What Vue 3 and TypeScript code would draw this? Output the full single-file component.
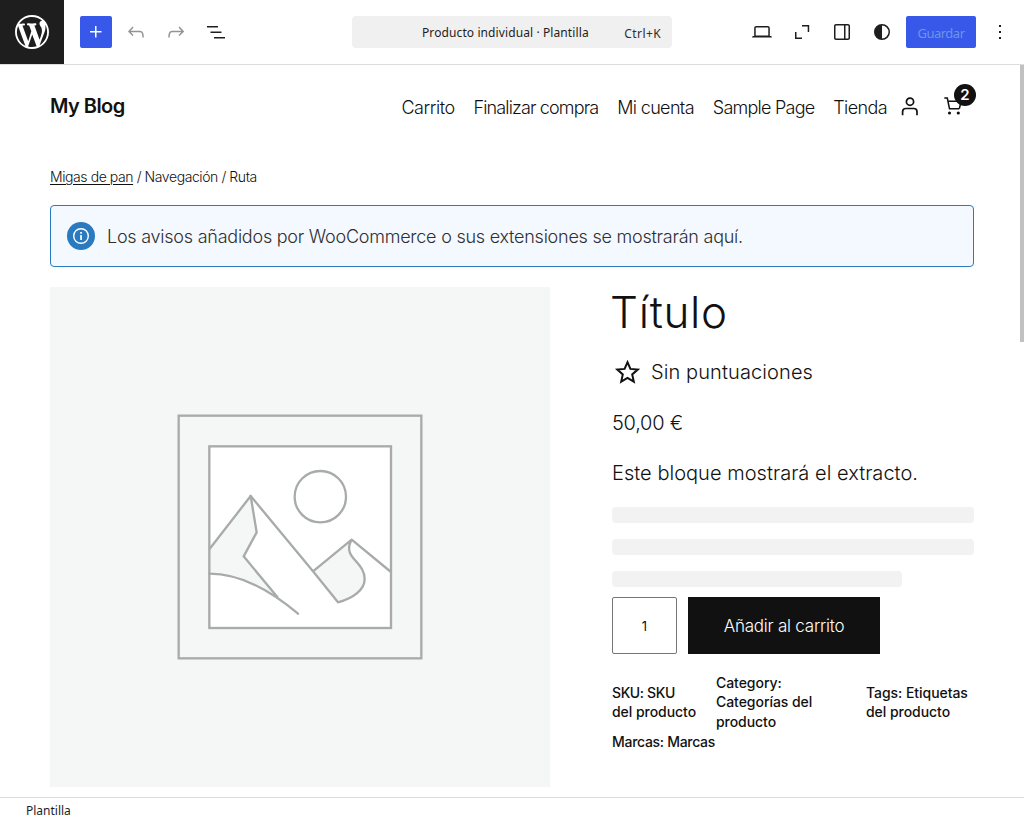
<script setup lang="ts">
interface NavLink {
  label: string
  cls: string
}

const links: NavLink[] = [
  { label: 'Carrito', cls: 'n-cart' },
  { label: 'Finalizar compra', cls: 'n-checkout' },
  { label: 'Mi cuenta', cls: 'n-account' },
  { label: 'Sample Page', cls: 'n-sample' },
  { label: 'Tienda', cls: 'n-shop' },
]
</script>

<template>
  <div class="editor">
    <header class="topbar">
      <div class="wp">
        <svg width="34" height="34" viewBox="0 0 20 20">
          <path fill="#fff" d="M20 10c0-5.51-4.49-10-10-10C4.48 0 0 4.49 0 10c0 5.52 4.48 10 10 10 5.51 0 10-4.48 10-10zM7.78 15.37L4.37 6.22c.55-.02 1.17-.08 1.17-.08.5-.06.44-1.13-.06-1.11 0 0-1.45.11-2.37.11-.18 0-.37 0-.58-.01C4.12 2.69 6.87 1.11 10 1.11c2.33 0 4.45.87 6.05 2.34-.68-.11-1.65.39-1.65 1.58 0 .74.45 1.36.9 2.1.35.61.55 1.36.55 2.46 0 1.49-1.4 5-1.4 5l-3.03-8.37c.54-.02.82-.17.82-.17.5-.05.44-1.25-.06-1.22 0 0-1.44.12-2.38.12-.87 0-2.33-.12-2.33-.12-.5-.03-.56 1.2-.06 1.22l.92.08 1.26 3.41zM17.41 10c.24-.64.74-1.87.43-4.25.7 1.29 1.05 2.71 1.05 4.25 0 3.29-1.73 6.24-4.4 7.78.97-2.59 1.94-5.2 2.92-7.78zM6.1 18.09C3.12 16.65 1.11 13.53 1.11 10c0-1.3.23-2.48.72-3.59C3.25 10.3 4.67 14.2 6.1 18.09zm4.03-6.63l2.58 6.98c-.86.29-1.76.45-2.71.45-.79 0-1.57-.11-2.29-.33.81-2.38 1.62-4.74 2.42-7.1z" />
        </svg>
      </div>
      <div class="tools">
        <button class="tool add"><svg viewBox="0 0 24 24"><path d="M11 12.5V17.5H12.5V12.5H17.5V11H12.5V6H11V11H6V12.5H11Z" /></svg></button>
        <button class="tool off"><svg viewBox="0 0 24 24"><path d="M18.3 11.7c-.6-.6-1.4-.9-2.3-.9H6.7l2.9-3.3-1.1-1-4.5 5L8.5 16l1-1-2.7-2.7H16c.5 0 .9.2 1.3.5 1 1 1 3.4 1 4.5v.3h1.5v-.2c0-1.5 0-4.3-1.5-5.7z" /></svg></button>
        <button class="tool off"><svg viewBox="0 0 24 24"><path d="M15.6 6.5l-1.1 1 2.9 3.3H8c-.9 0-1.7.3-2.3.9-1.4 1.5-1.4 4.2-1.4 5.6v.2h1.5v-.3c0-1.1 0-3.5 1-4.5.3-.3.7-.5 1.3-.5h9.2L14.5 15l1.1 1.1 4.6-4.6-4.6-5z" /></svg></button>
        <button class="tool"><svg viewBox="0 0 24 24"><path d="M3 6h11v1.5H3V6Zm3.5 5.5h11V13h-11v-1.5ZM21 17H10v1.5h11V17Z" /></svg></button>
      </div>
      <div class="command">
        <span class="doc">Producto individual · Plantilla</span>
        <span class="keys">Ctrl+K</span>
      </div>
      <div class="actions">
        <button class="tool"><svg viewBox="0 0 24 24"><path d="M20.5 16h-.7V8c0-1.1-.9-2-2-2H6.2c-1.1 0-2 .9-2 2v8h-.7c-.8 0-1.5.7-1.5 1.5h20c0-.8-.7-1.5-1.5-1.5zM5.7 8c0-.3.2-.5.5-.5h11.6c.3 0 .5.2.5.5v7.6H5.7V8z" /></svg></button>
        <button class="tool"><svg viewBox="0 0 24 24"><path d="M12 5h7.2v7h-1.5V6.500H12V5ZM5 12h1.500v5.500H12V19H5v-7Z" /></svg></button>
        <button class="tool"><svg viewBox="0 0 24 24"><path d="M18 4H6c-1.1 0-2 .9-2 2v12c0 1.1.9 2 2 2h12c1.1 0 2-.9 2-2V6c0-1.1-.9-2-2-2zm-4 14.5H6c-.3 0-.5-.2-.5-.5V6c0-.3.2-.5.5-.5h8v13zm4.5-.5c0 .3-.2.5-.5.5h-2.5v-13H18c.3 0 .5.2.5.5v12z" /></svg></button>
        <button class="tool"><svg viewBox="0 0 24 24"><path fill-rule="evenodd" d="M20 12a8 8 0 1 1-16 0 8 8 0 0 1 16 0Zm-1.5 0a6.5 6.5 0 0 1-6.5 6.500v-13a6.5 6.5 0 0 1 6.5 6.500Z" /></svg></button>
        <button class="save">Guardar</button>
        <button class="tool"><svg viewBox="0 0 24 24"><path d="M13 19h-2v-2h2v2zm0-6h-2v-2h2v2zm0-6h-2V5h2v2z" /></svg></button>
      </div>
    </header>

    <main class="canvas">
      <div class="site-head">
        <div class="site-title"><span>My Blog</span></div>
        <nav>
          <a v-for="l in links" :key="l.label" :class="l.cls">{{ l.label }}</a>
        </nav>
        <svg class="user" width="18" height="19" viewBox="0 0 18 19" fill="none" stroke="#111" stroke-width="1.7">
          <circle cx="9" cy="4.700" r="3.600" />
          <path d="M1.600 18.200v-3.400q0-3.300 3.300-3.300h7.800q3.300 0 3.300 3.300v3.400" />
        </svg>
        <div class="cart">
          <svg width="20" height="20" viewBox="0 0 20 20" fill="none" stroke="#111" stroke-width="1.500">
            <path d="M.3 2h3l2.200 10.700h9.700M4 5.300h13.200l-1.900 7.400" />
            <circle cx="5.500" cy="17" r="1.600" fill="#111" stroke="none" />
            <circle cx="14.300" cy="17" r="1.600" fill="#111" stroke="none" />
          </svg>
          <span class="badge">2</span>
        </div>
      </div>

      <div class="crumbs"><span><u>Migas de pan</u> / Navegación / Ruta</span></div>

      <div class="notice">
        <svg width="28" height="28" viewBox="0 0 28 28">
          <circle cx="14" cy="14" r="14" fill="#2a7ac0" />
          <circle cx="14" cy="14" r="7.300" fill="none" stroke="#fff" stroke-width="1.400" />
          <path fill="#fff" d="M13.200 10h1.700v1.700h-1.700zM13.200 13h1.700v5h-1.700z" />
        </svg>
        <span>Los avisos añadidos por WooCommerce o sus extensiones se mostrarán aquí.</span>
      </div>

      <div class="product">
        <svg class="photo" width="500" height="500" viewBox="-360 -354 1500 1500" fill="none" stroke="#a8abab" stroke-width="7" stroke-linejoin="round">
          <rect x="-360" y="-354" width="1500" height="1500" fill="#f5f7f7" stroke="none" />
          <rect x="26" y="32" width="728" height="728" stroke-linejoin="miter" />
          <rect x="118" y="124" width="545" height="545" fill="#fff" stroke="none" />
          <path fill="#f5f7f7" stroke="none" d="M118 433L242 273L260 382L221 454L322 576Q205 506 118 506Z" />
          <path d="M118 433L242 273L429 499M545 404L663 501" />
          <path fill="#f5f7f7" d="M429 499L545 404C514 458 584 468 584 522C584 554 550 580 504 592Z" />
          <path d="M242 273L260 382L221 454L322 576M118 506C210 506 306 560 384 626" stroke-linecap="round" />
          <circle cx="451" cy="275" r="77" />
          <rect x="118" y="124" width="545" height="545" stroke-linejoin="miter" />
        </svg>

        <section class="summary">
          <h1><span>Título</span></h1>
          <div class="rating">
            <svg width="26" height="26" viewBox="0 0 26 26" fill="none" stroke="#111" stroke-width="2">
              <path d="M13.500 3.200L16.400 9.900L23.700 10.600L18.200 15.400L19.800 22.600L13.500 18.800L7.200 22.600L8.800 15.400L3.300 10.600L10.600 9.900Z" />
            </svg>
            <span>Sin puntuaciones</span>
          </div>
          <div class="price"><span>50,00 €</span></div>
          <div class="excerpt"><span>Este bloque mostrará el extracto.</span></div>
          <div class="bars"><i></i><i></i><i class="short"></i></div>
          <div class="buy">
            <div class="qty">1</div>
            <button class="add-cart"><span>Añadir al carrito</span></button>
          </div>
          <div class="meta">
            <div class="sku"><span>SKU: SKU</span><br />del producto</div>
            <div class="cat">Category:<br />Categorías del<br />producto</div>
            <div class="tags">Tags: Etiquetas<br />del producto</div>
          </div>
          <div class="brands">Marcas: Marcas</div>
        </section>
      </div>
      <div class="scrollbar"></div>
    </main>

    <footer><span>Plantilla</span></footer>
  </div>
</template>

<style>
html,
body {
  margin: 0;
  overflow: hidden;
  background: #fff;
}
</style>

<style scoped>
.editor {
  width: 1024px;
  height: 822px;
  display: flex;
  flex-direction: column;
  background: #fff;
  color: #1e1e1e;
  font-family: 'Noto Sans', 'Open Sans', sans-serif;
  font-size: 13px;
  overflow: hidden;
}
.editor * {
  box-sizing: border-box;
}
svg {
  display: block;
  flex: none;
}
span,
nav a {
  white-space: nowrap;
}
button {
  border: 0;
  padding: 0;
  background: none;
  font: inherit;
}
.topbar {
  height: 65px;
  flex: none;
  display: flex;
  border-bottom: 1px solid #ddd;
}
.wp {
  width: 64px;
  height: 64px;
  background: #1e1e1e;
  display: grid;
  place-items: center;
}
.tools {
  display: flex;
  align-items: center;
  gap: 8px;
  width: 288px;
  padding-left: 16px;
}
.tool {
  width: 32px;
  height: 32px;
  display: grid;
  place-items: center;
  fill: #1e1e1e;
}
.tool svg {
  width: 24px;
  height: 24px;
}
.add {
  background: #3858e9;
  border-radius: 2px;
  fill: #fff;
}
.off {
  fill: #949494;
}
.command {
  width: 320px;
  height: 32px;
  margin-top: 16px;
  background: #f0f0f0;
  border-radius: 4px;
  display: flex;
  align-items: center;
  padding: 0 11px 0 70px;
  justify-content: space-between;
  font-size: 12px;
}
.doc {
  letter-spacing: 0.1px;
}
.keys {
  padding-top: 2px;
  color: #2f2f2f;
  letter-spacing: 0.4px;
}
.actions {
  display: flex;
  align-items: center;
  gap: 8px;
  margin-left: 74px;
}
.save {
  width: 70px;
  height: 32px;
  background: #3858e9;
  border-radius: 2px;
  color: #6a96ea;
  padding-top: 2px;
  letter-spacing: -0.5px;
}
.canvas {
  position: relative;
  height: 732px;
  flex: none;
  padding: 0 50px;
  font-family: Inter, sans-serif;
  font-weight: 300;
  color: #111;
  overflow: hidden;
}
.scrollbar {
  position: absolute;
  right: 0;
  top: 0;
  width: 4px;
  height: 277px;
  background: #c1c1c1;
}
.site-head {
  display: flex;
  align-items: center;
  height: 82px;
}
.site-title {
  flex: 1;
  font-size: 20px;
  font-weight: 600;
  letter-spacing: -0.55px;
}
nav {
  display: flex;
  gap: 18.800px;
  padding-top: 2px;
  font-size: 18px;
}
.n-cart {
  letter-spacing: -0.45px;
}
.n-checkout {
  letter-spacing: -0.85px;
}
.n-account {
  letter-spacing: -0.63px;
}
.n-sample {
  letter-spacing: -0.76px;
}
.n-shop {
  letter-spacing: -0.6px;
}
.user {
  margin-left: 14px;
}
.cart {
  position: relative;
  margin: 0 10px 0 25px;
}
.badge {
  position: absolute;
  left: 10px;
  top: -12px;
  width: 22px;
  height: 22px;
  border-radius: 50%;
  background: #111;
  color: #fff;
  font-size: 15px;
  font-weight: 600;
  line-height: 22px;
  text-align: center;
}
.crumbs {
  margin-top: 20px;
  height: 20px;
  line-height: 20px;
  font-size: 14px;
  letter-spacing: -0.42px;
}
u {
  text-underline-offset: 2px;
}
.notice {
  margin-top: 18px;
  height: 62px;
  border: 1px solid #2a7ac0;
  border-radius: 4px;
  background: #f4f8ff;
  display: flex;
  align-items: center;
  gap: 12px;
  padding-left: 16px;
  font-size: 18px;
  letter-spacing: -0.24px;
  color: #2f2f2f;
}
.product {
  display: flex;
  gap: 62px;
  margin-top: 20px;
}
.summary {
  width: 362px;
  display: flex;
  flex-direction: column;
}
h1 {
  margin: 0 0 0 -2px;
  height: 50px;
  line-height: 50px;
  font-size: 44px;
  font-weight: 300;
  letter-spacing: 0.7px;
}
.rating {
  margin-top: 20px;
  height: 30px;
  display: flex;
  align-items: center;
  gap: 11px;
  padding-left: 2px;
  font-size: 20px;
  letter-spacing: 0.1px;
}
.price,
.excerpt {
  margin-top: 20px;
  height: 30px;
  line-height: 32px;
  font-size: 20px;
}
.price {
  letter-spacing: -0.25px;
}
.excerpt {
  letter-spacing: 0.03px;
}
.bars {
  margin-top: 20px;
  display: flex;
  flex-direction: column;
  gap: 16px;
}
.bars i {
  height: 16px;
  border-radius: 4px;
  background: #f2f2f2;
}
.bars .short {
  width: 290px;
}
.buy {
  margin-top: 10px;
  display: flex;
  gap: 11px;
}
.qty {
  width: 65px;
  height: 57px;
  border: 1px solid #767676;
  border-radius: 2px;
  font-size: 13px;
  font-weight: 400;
  line-height: 57px;
  text-align: center;
}
.add-cart {
  width: 192px;
  height: 57px;
  background: #111;
  color: #fff;
  font-size: 17px;
  letter-spacing: -0.23px;
}
.meta {
  margin-top: 19px;
  height: 58px;
  display: flex;
  align-items: center;
}
.meta,
.brands {
  font-size: 14px;
  font-weight: 500;
  line-height: 19.500px;
  white-space: nowrap;
  letter-spacing: -0.05px;
}
.sku {
  width: 104px;
}
.sku span {
  letter-spacing: -0.4px;
}
.cat {
  width: 150px;
}
.meta + .brands {
  margin-top: 1px;
  letter-spacing: -0.3px;
}
footer {
  height: 25px;
  flex: none;
  border-top: 1px solid #ddd;
  padding-left: 26px;
  font-size: 12px;
  line-height: 26px;
}
</style>
